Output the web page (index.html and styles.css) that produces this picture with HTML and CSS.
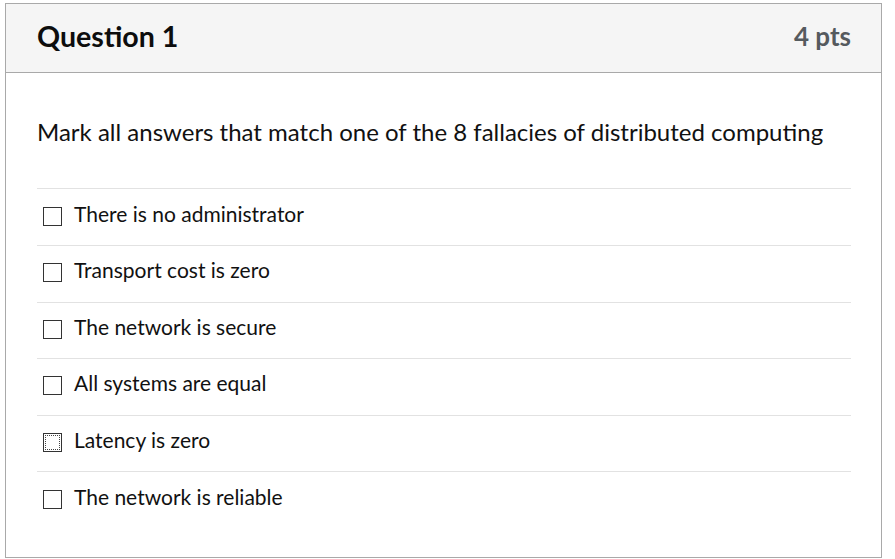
FILE: index.html
```html
<!DOCTYPE html>
<html>
<head>
<meta charset="utf-8">
<link rel="stylesheet" href="styles.css">
</head>
<body>
<div class="card">
  <div class="header">
    <h2 class="title">Question 1</h2>
    <span class="pts">4 pts</span>
  </div>
  <div class="content">
    <p class="question">Mark all answers that match one of the 8 fallacies of distributed computing</p>
    <div class="answers">
      <label class="answer"><span class="box"></span><span class="label">There is no administrator</span></label>
      <label class="answer"><span class="box"></span><span class="label">Transport cost is zero</span></label>
      <label class="answer"><span class="box"></span><span class="label">The network is secure</span></label>
      <label class="answer"><span class="box"></span><span class="label">All systems are equal</span></label>
      <label class="answer"><span class="box focused"></span><span class="label">Latency is zero</span></label>
      <label class="answer"><span class="box"></span><span class="label">The network is reliable</span></label>
    </div>
  </div>
</div>
</body>
</html>
```
FILE: styles.css
```css
html, body {
  margin: 0;
  padding: 0;
  background: #ffffff;
}
body {
  font-family: Lato, "Liberation Sans", sans-serif;
  color: #111111;
  padding: 3px 0 0 5px;
}
.card {
  width: 875px;
  border: 1px solid #a9a9a9;
  background: #ffffff;
}
.header {
  display: flex;
  justify-content: space-between;
  align-items: center;
  height: 64px;
  padding: 0 30px 4px 31px;
  background: #f5f5f5;
  border-bottom: 1px solid #a9a9a9;
}
.title {
  margin: 0;
  font-size: 28.6px;
  line-height: 32px;
  font-weight: 700;
  color: #0d0d0d;
}
.pts {
  font-size: 26px;
  line-height: 32px;
  font-weight: 700;
  color: #555a5e;
}
.content {
  padding: 46px 30px 29px 31px;
}
.question {
  margin: 0 0 43px 0;
  font-size: 24px;
  line-height: 26.4px;
  color: #111111;
}
.answer {
  display: flex;
  align-items: flex-start;
  border-top: 1px solid #e2e2e2;
  padding: 12.3px 0 19.3px 6px;
  font-size: 21px;
  line-height: 24px;
}
.box {
  width: 17px;
  height: 17px;
  border: 1px solid #333333;
  background: #ffffff;
  margin-top: 5px;
  margin-right: 12px;
  flex: none;
  position: relative;
}
.box.focused::after {
  content: "";
  position: absolute;
  left: 1px;
  top: 1px;
  right: 1px;
  bottom: 1px;
  border: 1px dotted #444444;
}
.label {
  color: #111111;
}
```
